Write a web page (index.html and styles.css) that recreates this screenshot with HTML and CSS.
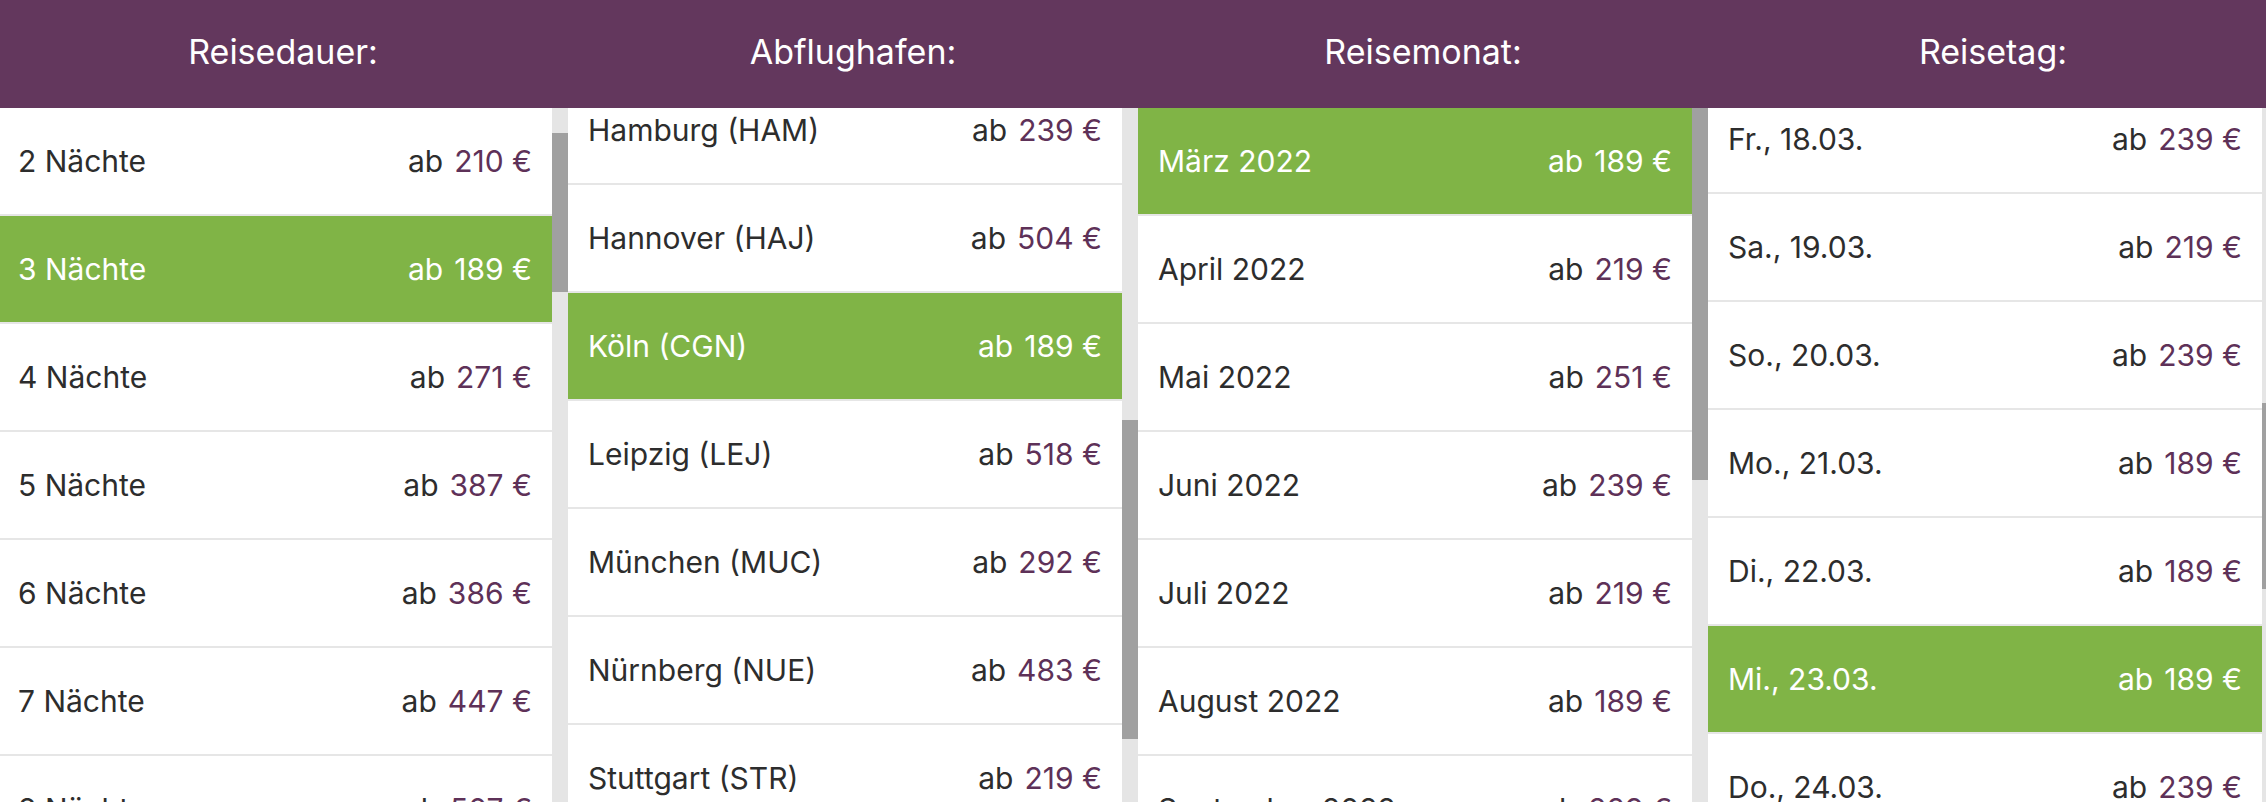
FILE: index.html
```html
<!DOCTYPE html>
<html lang="de">
<head>
<meta charset="utf-8">
<title>Reisefilter</title>
<link rel="stylesheet" href="styles.css">
</head>
<body>
<div class="filters">
  <section class="filter">
    <h2 class="filter-title">Reisedauer:</h2>
    <div class="filter-body">
      <ul class="options" data-scroll="108">
        <li class="option"><span class="label">1 Nacht</span><span class="price"><span class="from">ab</span><span class="amount">229 €</span></span></li>
        <li class="option"><span class="label">2 Nächte</span><span class="price"><span class="from">ab</span><span class="amount">210 €</span></span></li>
        <li class="option is-selected"><span class="label">3 Nächte</span><span class="price"><span class="from">ab</span><span class="amount">189 €</span></span></li>
        <li class="option"><span class="label">4 Nächte</span><span class="price"><span class="from">ab</span><span class="amount">271 €</span></span></li>
        <li class="option"><span class="label">5 Nächte</span><span class="price"><span class="from">ab</span><span class="amount">387 €</span></span></li>
        <li class="option"><span class="label">6 Nächte</span><span class="price"><span class="from">ab</span><span class="amount">386 €</span></span></li>
        <li class="option"><span class="label">7 Nächte</span><span class="price"><span class="from">ab</span><span class="amount">447 €</span></span></li>
        <li class="option"><span class="label">8 Nächte</span><span class="price"><span class="from">ab</span><span class="amount">507 €</span></span></li>
        <li class="option"><span class="label">9 Nächte</span><span class="price"><span class="from">ab</span><span class="amount">539 €</span></span></li>
        <li class="option"><span class="label">10 Nächte</span><span class="price"><span class="from">ab</span><span class="amount">578 €</span></span></li>
        <li class="option"><span class="label">11 Nächte</span><span class="price"><span class="from">ab</span><span class="amount">612 €</span></span></li>
        <li class="option"><span class="label">12 Nächte</span><span class="price"><span class="from">ab</span><span class="amount">655 €</span></span></li>
        <li class="option"><span class="label">13 Nächte</span><span class="price"><span class="from">ab</span><span class="amount">689 €</span></span></li>
        <li class="option"><span class="label">14 Nächte</span><span class="price"><span class="from">ab</span><span class="amount">702 €</span></span></li>
        <li class="option"><span class="label">15 Nächte</span><span class="price"><span class="from">ab</span><span class="amount">745 €</span></span></li>
        <li class="option"><span class="label">16 Nächte</span><span class="price"><span class="from">ab</span><span class="amount">788 €</span></span></li>
        <li class="option"><span class="label">17 Nächte</span><span class="price"><span class="from">ab</span><span class="amount">812 €</span></span></li>
        <li class="option"><span class="label">18 Nächte</span><span class="price"><span class="from">ab</span><span class="amount">856 €</span></span></li>
        <li class="option"><span class="label">19 Nächte</span><span class="price"><span class="from">ab</span><span class="amount">889 €</span></span></li>
        <li class="option"><span class="label">20 Nächte</span><span class="price"><span class="from">ab</span><span class="amount">921 €</span></span></li>
        <li class="option"><span class="label">21 Nächte</span><span class="price"><span class="from">ab</span><span class="amount">958 €</span></span></li>
        <li class="option"><span class="label">22 Nächte</span><span class="price"><span class="from">ab</span><span class="amount">993 €</span></span></li>
        <li class="option"><span class="label">23 Nächte</span><span class="price"><span class="from">ab</span><span class="amount">1.029 €</span></span></li>
        <li class="option"><span class="label">24 Nächte</span><span class="price"><span class="from">ab</span><span class="amount">1.064 €</span></span></li>
        <li class="option"><span class="label">25 Nächte</span><span class="price"><span class="from">ab</span><span class="amount">1.098 €</span></span></li>
        <li class="option"><span class="label">26 Nächte</span><span class="price"><span class="from">ab</span><span class="amount">1.133 €</span></span></li>
        <li class="option"><span class="label">27 Nächte</span><span class="price"><span class="from">ab</span><span class="amount">1.167 €</span></span></li>
        <li class="option"><span class="label">28 Nächte</span><span class="price"><span class="from">ab</span><span class="amount">1.202 €</span></span></li>
      </ul>
      <div class="track"><div class="thumb"></div></div>
    </div>
  </section>

  <section class="filter">
    <h2 class="filter-title">Abflughafen:</h2>
    <div class="filter-body">
      <ul class="options" data-scroll="679">
        <li class="option"><span class="label">Berlin (BER)</span><span class="price"><span class="from">ab</span><span class="amount">259 €</span></span></li>
        <li class="option"><span class="label">Bremen (BRE)</span><span class="price"><span class="from">ab</span><span class="amount">312 €</span></span></li>
        <li class="option"><span class="label">Dortmund (DTM)</span><span class="price"><span class="from">ab</span><span class="amount">276 €</span></span></li>
        <li class="option"><span class="label">Dresden (DRS)</span><span class="price"><span class="from">ab</span><span class="amount">341 €</span></span></li>
        <li class="option"><span class="label">Düsseldorf (DUS)</span><span class="price"><span class="from">ab</span><span class="amount">229 €</span></span></li>
        <li class="option"><span class="label">Frankfurt (FRA)</span><span class="price"><span class="from">ab</span><span class="amount">219 €</span></span></li>
        <li class="option"><span class="label">Hamburg (HAM)</span><span class="price"><span class="from">ab</span><span class="amount">239 €</span></span></li>
        <li class="option"><span class="label">Hannover (HAJ)</span><span class="price"><span class="from">ab</span><span class="amount">504 €</span></span></li>
        <li class="option is-selected"><span class="label">Köln (CGN)</span><span class="price"><span class="from">ab</span><span class="amount">189 €</span></span></li>
        <li class="option"><span class="label">Leipzig (LEJ)</span><span class="price"><span class="from">ab</span><span class="amount">518 €</span></span></li>
        <li class="option"><span class="label">München (MUC)</span><span class="price"><span class="from">ab</span><span class="amount">292 €</span></span></li>
        <li class="option"><span class="label">Nürnberg (NUE)</span><span class="price"><span class="from">ab</span><span class="amount">483 €</span></span></li>
        <li class="option"><span class="label">Stuttgart (STR)</span><span class="price"><span class="from">ab</span><span class="amount">219 €</span></span></li>
        <li class="option"><span class="label">Weeze (NRN)</span><span class="price"><span class="from">ab</span><span class="amount">264 €</span></span></li>
      </ul>
      <div class="track"><div class="thumb"></div></div>
    </div>
  </section>

  <section class="filter">
    <h2 class="filter-title">Reisemonat:</h2>
    <div class="filter-body">
      <ul class="options" data-scroll="0">
        <li class="option is-selected"><span class="label">März 2022</span><span class="price"><span class="from">ab</span><span class="amount">189 €</span></span></li>
        <li class="option"><span class="label">April 2022</span><span class="price"><span class="from">ab</span><span class="amount">219 €</span></span></li>
        <li class="option"><span class="label">Mai 2022</span><span class="price"><span class="from">ab</span><span class="amount">251 €</span></span></li>
        <li class="option"><span class="label">Juni 2022</span><span class="price"><span class="from">ab</span><span class="amount">239 €</span></span></li>
        <li class="option"><span class="label">Juli 2022</span><span class="price"><span class="from">ab</span><span class="amount">219 €</span></span></li>
        <li class="option"><span class="label">August 2022</span><span class="price"><span class="from">ab</span><span class="amount">189 €</span></span></li>
        <li class="option"><span class="label">September 2022</span><span class="price"><span class="from">ab</span><span class="amount">229 €</span></span></li>
        <li class="option"><span class="label">Oktober 2022</span><span class="price"><span class="from">ab</span><span class="amount">249 €</span></span></li>
        <li class="option"><span class="label">November 2022</span><span class="price"><span class="from">ab</span><span class="amount">209 €</span></span></li>
        <li class="option"><span class="label">Dezember 2022</span><span class="price"><span class="from">ab</span><span class="amount">279 €</span></span></li>
        <li class="option"><span class="label">Januar 2023</span><span class="price"><span class="from">ab</span><span class="amount">229 €</span></span></li>
        <li class="option"><span class="label">Februar 2023</span><span class="price"><span class="from">ab</span><span class="amount">219 €</span></span></li>
      </ul>
      <div class="track"><div class="thumb"></div></div>
    </div>
  </section>

  <section class="filter">
    <h2 class="filter-title">Reisetag:</h2>
    <div class="filter-body">
      <ul class="options" data-scroll="1102">
        <li class="option"><span class="label">Di., 08.03.</span><span class="price"><span class="from">ab</span><span class="amount">249 €</span></span></li>
        <li class="option"><span class="label">Mi., 09.03.</span><span class="price"><span class="from">ab</span><span class="amount">229 €</span></span></li>
        <li class="option"><span class="label">Do., 10.03.</span><span class="price"><span class="from">ab</span><span class="amount">239 €</span></span></li>
        <li class="option"><span class="label">Fr., 11.03.</span><span class="price"><span class="from">ab</span><span class="amount">259 €</span></span></li>
        <li class="option"><span class="label">Sa., 12.03.</span><span class="price"><span class="from">ab</span><span class="amount">219 €</span></span></li>
        <li class="option"><span class="label">So., 13.03.</span><span class="price"><span class="from">ab</span><span class="amount">249 €</span></span></li>
        <li class="option"><span class="label">Mo., 14.03.</span><span class="price"><span class="from">ab</span><span class="amount">209 €</span></span></li>
        <li class="option"><span class="label">Di., 15.03.</span><span class="price"><span class="from">ab</span><span class="amount">199 €</span></span></li>
        <li class="option"><span class="label">Mi., 16.03.</span><span class="price"><span class="from">ab</span><span class="amount">219 €</span></span></li>
        <li class="option"><span class="label">Do., 17.03.</span><span class="price"><span class="from">ab</span><span class="amount">229 €</span></span></li>
        <li class="option"><span class="label">Fr., 18.03.</span><span class="price"><span class="from">ab</span><span class="amount">239 €</span></span></li>
        <li class="option"><span class="label">Sa., 19.03.</span><span class="price"><span class="from">ab</span><span class="amount">219 €</span></span></li>
        <li class="option"><span class="label">So., 20.03.</span><span class="price"><span class="from">ab</span><span class="amount">239 €</span></span></li>
        <li class="option"><span class="label">Mo., 21.03.</span><span class="price"><span class="from">ab</span><span class="amount">189 €</span></span></li>
        <li class="option"><span class="label">Di., 22.03.</span><span class="price"><span class="from">ab</span><span class="amount">189 €</span></span></li>
        <li class="option is-selected"><span class="label">Mi., 23.03.</span><span class="price"><span class="from">ab</span><span class="amount">189 €</span></span></li>
        <li class="option"><span class="label">Do., 24.03.</span><span class="price"><span class="from">ab</span><span class="amount">239 €</span></span></li>
        <li class="option"><span class="label">Fr., 25.03.</span><span class="price"><span class="from">ab</span><span class="amount">259 €</span></span></li>
        <li class="option"><span class="label">Sa., 26.03.</span><span class="price"><span class="from">ab</span><span class="amount">229 €</span></span></li>
        <li class="option"><span class="label">So., 27.03.</span><span class="price"><span class="from">ab</span><span class="amount">249 €</span></span></li>
        <li class="option"><span class="label">Mo., 28.03.</span><span class="price"><span class="from">ab</span><span class="amount">209 €</span></span></li>
        <li class="option"><span class="label">Di., 29.03.</span><span class="price"><span class="from">ab</span><span class="amount">199 €</span></span></li>
        <li class="option"><span class="label">Mi., 30.03.</span><span class="price"><span class="from">ab</span><span class="amount">219 €</span></span></li>
        <li class="option"><span class="label">Do., 31.03.</span><span class="price"><span class="from">ab</span><span class="amount">229 €</span></span></li>
      </ul>
      <div class="track"><div class="thumb"></div></div>
    </div>
  </section>
</div>
<script src="script.js"></script>
</body>
</html>
```

FILE: styles.css
```css
html,
body {
  margin: 0;
  height: 100%;
  overflow: hidden;
}

body {
  font-family: Inter, "Noto Sans", "Liberation Sans", sans-serif;
  color: #2d2d2d;
  background: #ffffff;
}

.filters {
  display: grid;
  grid-template-columns: repeat(4, 570px);
  height: 100vh;
  margin-left: -2px;
}

.filter {
  display: flex;
  flex-direction: column;
  min-height: 0;
}

.filter-title {
  margin: 0;
  height: 108px;
  box-sizing: border-box;
  padding-bottom: 6px;
  background: #63375d;
  color: #ffffff;
  font-size: 34px;
  font-weight: 400;
  display: flex;
  align-items: center;
  justify-content: center;
}

.filter-body {
  flex: 1;
  min-height: 0;
  display: flex;
}

.options {
  flex: 1;
  list-style: none;
  margin: 0;
  padding: 0;
  overflow: hidden;
}

.option {
  height: 106px;
  border-bottom: 2px solid #e6e6e6;
  padding: 0 20px;
  display: flex;
  align-items: center;
  justify-content: space-between;
  font-size: 30px;
  white-space: nowrap;
}

.option.is-selected {
  background: #80b446;
  color: #ffffff;
}

.from {
  color: #2d2d2d;
}

.amount {
  margin-left: 11px;
  color: #5e3158;
}

.is-selected .from,
.is-selected .amount {
  color: #ffffff;
}

.track {
  width: 16px;
  flex: none;
  background: #e5e5e5;
}

.thumb {
  background: #a0a0a0;
}
```

FILE: script.js
```js
document.querySelectorAll('.filter-body').forEach(function (body) {
  var list = body.querySelector('.options');
  var track = body.querySelector('.track');
  var thumb = body.querySelector('.thumb');
  list.scrollTop = parseInt(list.getAttribute('data-scroll'), 10) || 0;
  var ratio = track.clientHeight / list.scrollHeight;
  thumb.style.height = Math.round(list.clientHeight * ratio) + 'px';
  thumb.style.marginTop = Math.round(list.scrollTop * ratio) + 'px';
});
```
